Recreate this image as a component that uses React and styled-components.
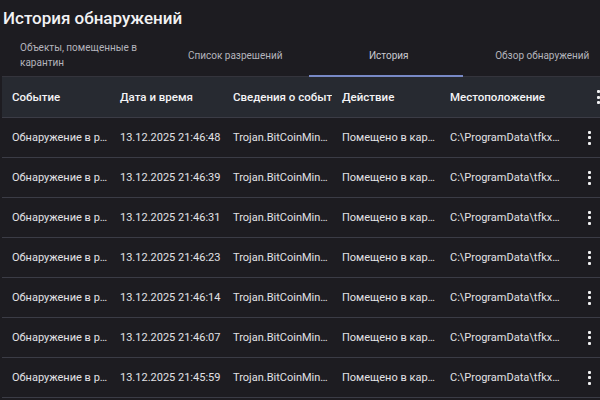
import React from 'react'
import styled, { createGlobalStyle } from 'styled-components'

const GlobalStyle = createGlobalStyle`
  html, body {
    margin: 0;
    padding: 0;
    background: #1d1c21;
  }
  body {
    font-family: Roboto, "Noto Sans", "Liberation Sans", sans-serif;
    color: #e6e6ea;
  }
`

const Page = styled.div`
  width: 600px;
  height: 400px;
  overflow: hidden;
  background: #1d1c21;
`

const Title = styled.h1`
  margin: 0;
  height: 35px;
  padding-left: 3px;
  display: flex;
  align-items: center;
  font-size: 17px;
  font-weight: 500;
  color: #f2f2f4;
`

const TabBar = styled.div`
  display: flex;
  margin-left: 2px;
  width: 640px;
  height: 41px;
  border-bottom: 1px solid #34343c;
`

const Tab = styled.div`
  flex: 0 0 153.5px;
  display: flex;
  align-items: center;
  justify-content: center;
  box-sizing: border-box;
  padding: 0 12px 0 18px;
  font-size: 10px;
  line-height: 15px;
  color: ${p => (p.$active ? '#c9c9d0' : '#b4b4bc')};
  border-bottom: 2px solid ${p => (p.$active ? '#7889c6' : 'transparent')};
  margin-bottom: -1px;
  span {
    text-align: left;
  }
`

const Table = styled.div`
  margin-left: 2px;
  width: 640px;
`

const Row = styled.div`
  display: grid;
  grid-template-columns: 108px 113px 109px 108px 124px 50px;
  height: ${p => (p.$head ? '41px' : '40px')};
  align-items: center;
  background: ${p => (p.$head ? '#272a31' : 'transparent')};
  border-bottom: 1px solid #3b3c46;
  box-sizing: border-box;
  font-size: ${p => (p.$head ? '11.5px' : '11px')};
  font-weight: ${p => (p.$head ? 500 : 400)};
  color: ${p => (p.$head ? '#f4f4f6' : '#e2e2e6')};
`

const Cell = styled.div`
  padding: 0 0 0 10px;
  white-space: nowrap;
  overflow: ${p => (p.$visible ? 'visible' : 'hidden')};
  text-overflow: ${p => (p.$clip ? 'clip' : 'ellipsis')};
`

const Kebab = styled.div`
  display: flex;
  flex-direction: column;
  align-items: center;
  gap: 2.5px;
  margin-left: ${p => p.$shift || 0}px;
  i {
    width: 3px;
    height: 3px;
    border-radius: 1px;
    background: #f0f0f2;
  }
`

const Dots = ({ shift }) => (
  <Kebab $shift={shift}>
    <i />
    <i />
    <i />
  </Kebab>
)

const times = [
  '21:46:48',
  '21:46:39',
  '21:46:31',
  '21:46:23',
  '21:46:14',
  '21:46:07',
  '21:45:59',
]

export default function App() {
  return (
    <Page>
      <GlobalStyle />
      <Title>История обнаружений</Title>
      <TabBar>
        <Tab><span>Объекты, помещенные в карантин</span></Tab>
        <Tab><span>Список разрешений</span></Tab>
        <Tab $active><span>История</span></Tab>
        <Tab><span>Обзор обнаружений</span></Tab>
      </TabBar>
      <Table>
        <Row $head>
          <Cell>Событие</Cell>
          <Cell>Дата и время</Cell>
          <Cell $clip>Сведения о событии</Cell>
          <Cell>Действие</Cell>
          <Cell $visible>Местоположение</Cell>
          <Dots shift={18} />
        </Row>
        {times.map(t => (
          <Row key={t}>
            <Cell>Обнаружение в реальном времени</Cell>
            <Cell>13.12.2025 {t}</Cell>
            <Cell>Trojan.BitCoinMiner!MTB</Cell>
            <Cell>Помещено в карантин</Cell>
            <Cell>C:\ProgramData\tfkxqwe\miner.exe</Cell>
            <Dots />
          </Row>
        ))}
      </Table>
    </Page>
  )
}
